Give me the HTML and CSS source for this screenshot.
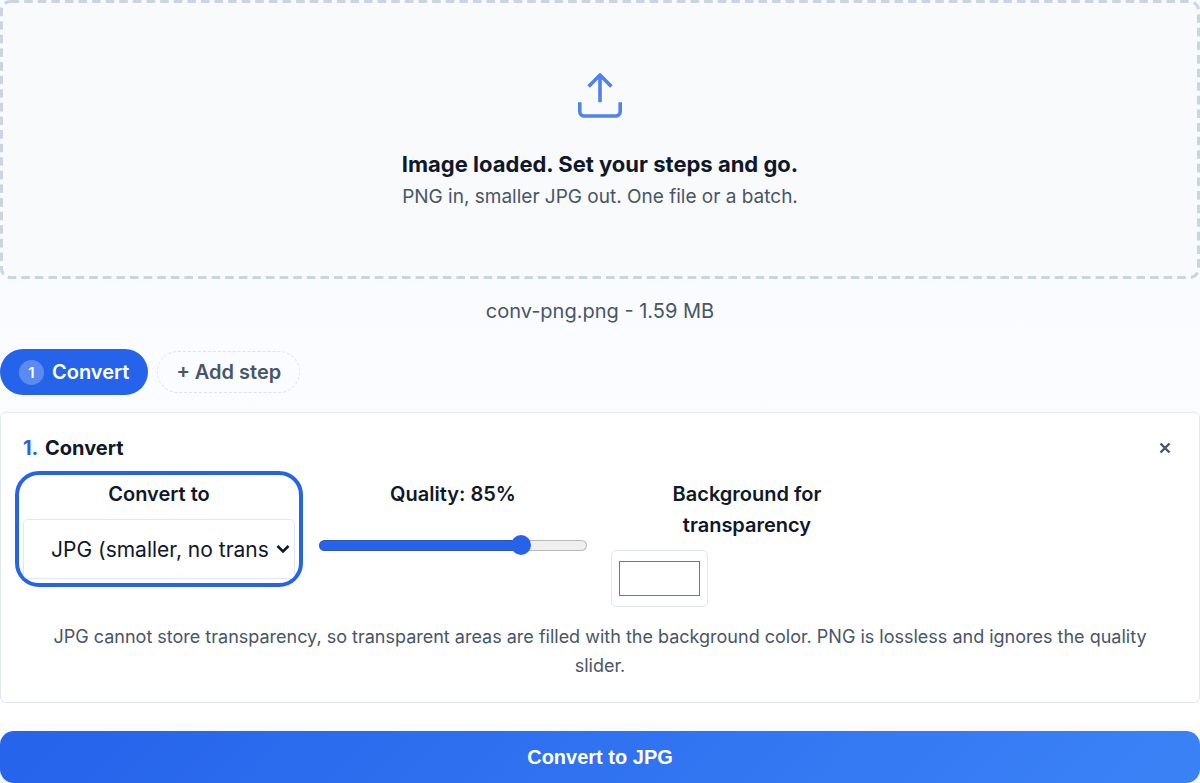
FILE: index.html
```
<!DOCTYPE html>
<html lang="en">
<head>
  <meta charset="UTF-8">
  <meta name="viewport" content="width=device-width, initial-scale=1.0">
  <title>PNG to JPG Converter</title>
  <link rel="stylesheet" href="styles.css">
</head>
<body>
  <main class="converter">
    <section class="dropzone">
      <svg class="dropzone-border" aria-hidden="true">
        <rect x="1.5" y="1.5" rx="9" />
      </svg>
      <svg class="upload-icon" viewBox="0 0 46 46" aria-hidden="true">
        <path d="M2.8 30.3v9.2a4.5 4.5 0 0 0 4.5 4.5h31.4a4.5 4.5 0 0 0 4.5-4.5v-9.2" />
        <path d="M23 30.3V3M11.6 14.4L23 3l11.4 11.4" />
      </svg>
      <h2 class="dropzone-title">Image loaded. Set your steps and go.</h2>
      <p class="dropzone-hint">PNG in, smaller JPG out. One file or a batch.</p>
    </section>

    <p class="file-info">conv-png.png - 1.59 MB</p>

    <div class="steps">
      <button type="button" class="step-chip"><span class="step-number">1</span>Convert</button>
      <button type="button" class="add-step">+ Add step</button>
    </div>

    <section class="panel">
      <div class="panel-header">
        <h3 class="panel-title"><span class="panel-index">1.</span> Convert</h3>
        <button type="button" class="remove-step" aria-label="Remove step">
          <svg viewBox="0 0 12 12" aria-hidden="true"><path d="M1.5 1.5l9 9M10.5 1.5l-9 9" /></svg>
        </button>
      </div>

      <div class="fields">
        <div class="field field-active">
          <label for="format">Convert to</label>
          <div class="select-wrap">
            <select id="format">
              <option>JPG (smaller, no transparency)</option>
              <option>PNG (lossless)</option>
            </select>
            <svg class="select-arrow" viewBox="0 0 14 10" aria-hidden="true"><path d="M1.5 2l5.5 5.5L12.5 2" /></svg>
          </div>
        </div>
        <div class="field">
          <label for="quality">Quality: 85%</label>
          <input type="range" id="quality" min="33" max="100" value="85">
        </div>
        <div class="field">
          <label for="background">Background for transparency</label>
          <input type="color" id="background" value="#ffffff">
        </div>
      </div>

      <p class="note">JPG cannot store transparency, so transparent areas are filled with the background color. PNG is lossless and ignores the quality slider.</p>
    </section>

    <button type="submit" class="convert-btn">Convert to JPG</button>
  </main>
</body>
</html>
```
FILE: styles.css
```
* {
  margin: 0;
  padding: 0;
  box-sizing: border-box;
}

body {
  font-family: Inter, 'Liberation Sans', sans-serif;
  color: #0f172a;
  background: linear-gradient(#f6fbff, #fafcff 50%, #ffffff);
  min-height: 100vh;
}

button,
select,
input {
  font-family: inherit;
}

.converter {
  display: flex;
  flex-direction: column;
}

/* drop zone */
.dropzone {
  position: relative;
  display: flex;
  flex-direction: column;
  align-items: center;
  padding: 72px 24px 68px;
  background: #f9fafc;
  border-radius: 10px;
  text-align: center;
}

.dropzone-border {
  position: absolute;
  top: 0;
  left: 0;
  width: 100%;
  height: 100%;
}

.dropzone-border rect {
  width: calc(100% - 3px);
  height: calc(100% - 3px);
  fill: none;
  stroke: #cbd5e1;
  stroke-width: 3;
  stroke-dasharray: 8.6 5;
}

.upload-icon {
  width: 46px;
  height: 46px;
  margin-bottom: 30px;
  fill: none;
  stroke: #4f82ec;
  stroke-width: 3.6;
  stroke-linejoin: round;
}

.dropzone-title {
  font-size: 22px;
  font-weight: 700;
  line-height: 32px;
}

.dropzone-hint {
  margin-top: 2px;
  font-size: 19px;
  line-height: 29px;
  color: #475569;
}

.file-info {
  margin-top: 16px;
  font-size: 20px;
  line-height: 32px;
  text-align: center;
  color: #475569;
}

/* steps */
.steps {
  display: flex;
  align-items: center;
  gap: 9px;
  margin-top: 22px;
}

.step-chip,
.add-step {
  display: flex;
  align-items: center;
  border-radius: 24px;
  font-size: 20px;
  font-weight: 600;
  cursor: pointer;
}

.step-chip {
  gap: 8px;
  height: 46px;
  padding: 0 19px;
  border: none;
  background: #2563eb;
  color: #ffffff;
}

.step-number {
  width: 25px;
  height: 25px;
  border-radius: 50%;
  background: rgba(255, 255, 255, 0.25);
  font-size: 15px;
  line-height: 25px;
  text-align: center;
}

.add-step {
  height: 42px;
  padding: 0 18px;
  border: 1px dashed #dde3eb;
  background: transparent;
  color: #475569;
}

/* step panel */
.panel {
  margin-top: 17px;
  padding: 19px 22px 22px;
  background: #ffffff;
  border: 1px solid #e2e8f0;
  border-radius: 6px;
}

.panel-header {
  display: flex;
  align-items: center;
  justify-content: space-between;
  margin-bottom: 15px;
}

.panel-title {
  font-size: 20px;
  font-weight: 700;
  line-height: 32px;
}

.panel-index {
  margin-right: 2px;
  color: #2563eb;
}

.remove-step {
  display: flex;
  padding: 6px;
  border: none;
  background: none;
  cursor: pointer;
}

.remove-step svg {
  width: 12px;
  height: 12px;
  stroke: #475569;
  stroke-width: 2.4;
}

.fields {
  display: grid;
  grid-template-columns: repeat(4, 1fr);
  align-items: start;
  gap: 22px;
}

.field {
  display: flex;
  flex-direction: column;
  align-items: flex-start;
  gap: 9px;
}

.field-active {
  border-radius: 16px;
  outline: 4px solid #2563eb;
  outline-offset: 4px;
}

.field label {
  width: 100%;
  padding: 0 40px;
  font-size: 20px;
  font-weight: 600;
  line-height: 31px;
  text-align: center;
}

.select-wrap {
  position: relative;
  width: 100%;
}

.select-wrap select {
  display: block;
  width: 100%;
  height: 60px;
  padding: 0 25px 0 27px;
  appearance: none;
  background: #ffffff;
  border: 1px solid #e2e8f0;
  border-radius: 5px;
  color: #0f172a;
  font-size: 21px;
}

.select-arrow {
  position: absolute;
  top: 25px;
  right: 5px;
  width: 14px;
  height: 10px;
  fill: none;
  stroke: #0f172a;
  stroke-width: 2.6;
  pointer-events: none;
}

input[type="range"] {
  width: 100%;
  height: 53px;
  padding: 0 2px;
  appearance: none;
  background: none;
}

input[type="range"]::-webkit-slider-runnable-track {
  height: 11px;
  border: 1px solid rgba(60, 60, 60, 0.3);
  border-radius: 6px;
  background: linear-gradient(90deg, #2563eb 75%, #efefef 75%) border-box;
}

input[type="range"]::-webkit-slider-thumb {
  appearance: none;
  width: 20px;
  height: 20px;
  margin-top: -6px;
  border-radius: 50%;
  background: #2563eb;
}

input[type="color"] {
  width: 97px;
  height: 57px;
  padding: 10px 7px;
  appearance: none;
  background: #ffffff;
  border: 1px solid #e2e8f0;
  border-radius: 5px;
}

input[type="color"]::-webkit-color-swatch-wrapper {
  padding: 0;
}

input[type="color"]::-webkit-color-swatch {
  border: 1px solid #777777;
  border-radius: 0;
}

.note {
  margin-top: 15px;
  padding: 0 12px;
  font-size: 18px;
  line-height: 29px;
  text-align: center;
  color: #475569;
}

.convert-btn {
  height: 52px;
  margin-top: 28px;
  border: none;
  border-radius: 14px;
  background: linear-gradient(135deg, #2563eb, #3b82f6);
  box-shadow: 0 4px 14px rgba(37, 99, 235, 0.12);
  color: #ffffff;
  font-family: 'Liberation Sans', Arial, sans-serif;
  font-size: 20px;
  font-weight: 700;
  cursor: pointer;
}
```
